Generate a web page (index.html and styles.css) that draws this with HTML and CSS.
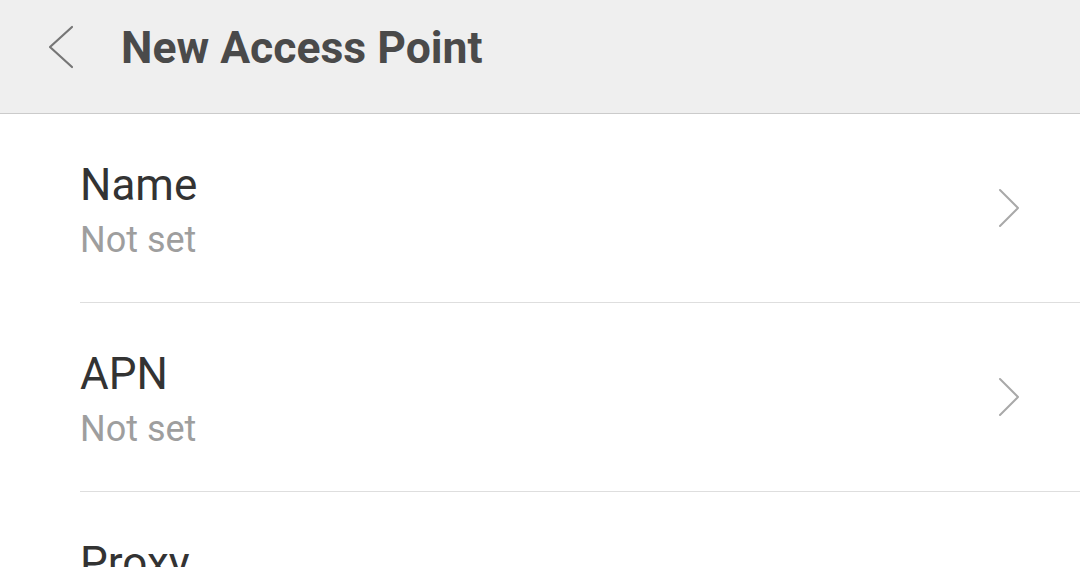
FILE: index.html
```html
<!DOCTYPE html>
<html>
<head>
<meta charset="utf-8">
<link rel="stylesheet" href="styles.css">
</head>
<body>
<header class="header">
  <svg class="back" width="26" height="44" viewBox="0 0 26 44"><path d="M24 2 L2 22 L24 42" fill="none" stroke="#767676" stroke-width="2.2" stroke-linecap="round" stroke-linejoin="round"/></svg>
  <h1 class="title">New Access Point</h1>
</header>
<main class="list">
  <div class="row">
    <div class="text">
      <div class="label">Name</div>
      <div class="value">Not set</div>
    </div>
    <svg class="chev" width="22" height="40" viewBox="0 0 22 40"><path d="M2 2 L20 20 L2 38" fill="none" stroke="#a9a9a9" stroke-width="2" stroke-linecap="round" stroke-linejoin="round"/></svg>
  </div>
  <div class="row">
    <div class="text">
      <div class="label">APN</div>
      <div class="value">Not set</div>
    </div>
    <svg class="chev" width="22" height="40" viewBox="0 0 22 40"><path d="M2 2 L20 20 L2 38" fill="none" stroke="#a9a9a9" stroke-width="2" stroke-linecap="round" stroke-linejoin="round"/></svg>
  </div>
  <div class="row">
    <div class="text">
      <div class="label">Proxy</div>
      <div class="value">Not set</div>
    </div>
    <svg class="chev" width="22" height="40" viewBox="0 0 22 40"><path d="M2 2 L20 20 L2 38" fill="none" stroke="#a9a9a9" stroke-width="2" stroke-linecap="round" stroke-linejoin="round"/></svg>
  </div>
</main>
</body>
</html>
```
FILE: styles.css
```css
html, body {
  margin: 0;
  padding: 0;
  background: #ffffff;
  font-family: Roboto, "Liberation Sans", sans-serif;
  overflow: hidden;
  height: 567px;
}
.header {
  box-sizing: border-box;
  background: #efefef;
  border-bottom: 1px solid #cbcbcb;
  display: flex;
  align-items: flex-start;
  padding: 23px 0 0 48px;
  height: 114px;
}
.back {
  display: block;
  margin-top: 2px;
  flex: none;
}
.title {
  margin: 0 0 0 47px;
  font-size: 44.5px;
  font-weight: 700;
  line-height: 50px;
  color: #4a4a4a;
  letter-spacing: 0;
}
.list {
  display: flex;
  flex-direction: column;
}
.row {
  margin-left: 80px;
  padding-right: 60px;
  height: 189px;
  box-sizing: border-box;
  border-bottom: 1px solid #dedede;
  display: flex;
  align-items: center;
  justify-content: space-between;
}
.text {
  padding-top: 45px;
  padding-bottom: 39px;
  align-self: flex-start;
}
.label {
  font-size: 44px;
  line-height: 52px;
  color: #333333;
}
.value {
  margin-top: 7px;
  font-size: 36px;
  line-height: 44px;
  color: #9e9e9e;
}
.chev {
  display: block;
  flex: none;
}
```
